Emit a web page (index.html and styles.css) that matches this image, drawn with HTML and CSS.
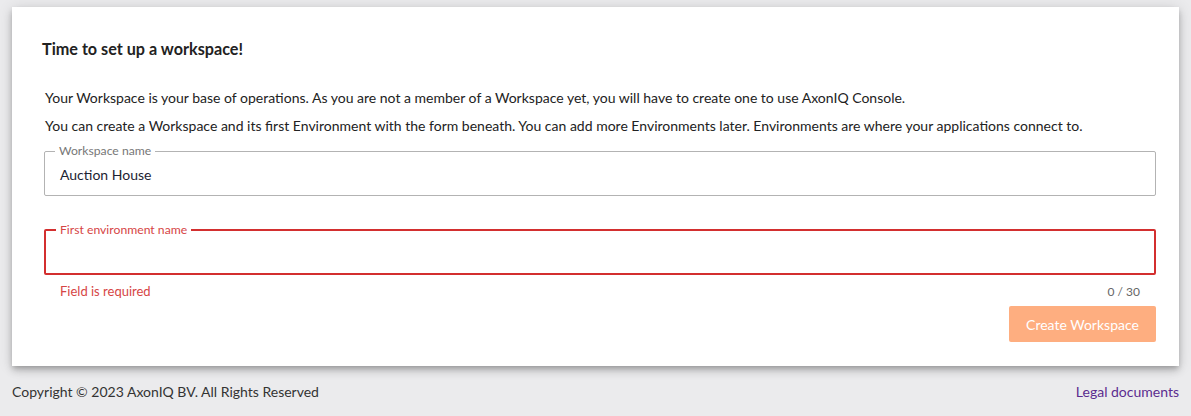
FILE: index.html
```html
<!DOCTYPE html>
<html lang="en">
<head>
<meta charset="utf-8">
<title>Create workspace</title>
<link rel="stylesheet" href="styles.css">
</head>
<body>
<div class="page">
  <main class="card">
    <h1 class="title">Time to set up a workspace!</h1>
    <div class="content">
      <p class="text">Your Workspace is your base of operations. As you are not a member of a Workspace yet, you will have to create one to use AxonIQ Console.</p>
      <p class="text">You can create a Workspace and its first Environment with the form beneath. You can add more Environments later. Environments are where your applications connect to.</p>
      <div class="field">
        <fieldset class="outline">
          <legend class="legend">Workspace name</legend>
          <div class="value">Auction House</div>
        </fieldset>
      </div>
      <div class="field field-error">
        <fieldset class="outline outline-error">
          <legend class="legend">First environment name</legend>
          <div class="value"></div>
        </fieldset>
        <div class="helper">
          <span class="helper-error">Field is required</span>
          <span class="counter">0 / 30</span>
        </div>
      </div>
      <div class="actions">
        <button class="btn" type="button" disabled>Create Workspace</button>
      </div>
    </div>
  </main>
  <footer class="footer">
    <span>Copyright © 2023 AxonIQ BV. All Rights Reserved</span>
    <a class="legal" href="#">Legal documents</a>
  </footer>
</div>
</body>
</html>
```
FILE: styles.css
```css
* { box-sizing: border-box; }
html, body { margin: 0; padding: 0; }
body {
  background: #ebebed;
  font-family: Lato, "Noto Sans", sans-serif;
  color: #222;
}
.page {
  padding: 7px 12px 0 12px;
}
.card {
  background: #fff;
  box-shadow: 0 3px 5px -1px rgba(0,0,0,0.2), 0 5px 8px 0 rgba(0,0,0,0.14), 0 1px 14px 0 rgba(0,0,0,0.12);
  padding: 30px 23px 23px 30px;
  height: 359px;
}
.title {
  margin: 0;
  font-size: 16.2px;
  font-weight: 700;
  line-height: 24px;
  color: #222;
}
.content {
  padding: 0 0 0 2px;
}
.text {
  margin: 0;
  font-size: 14px;
  line-height: 20px;
  color: #222;
  padding-left: 1px;
}
.text:first-of-type { margin-top: 27px; }
.text + .text { margin-top: 8px; }
.field { margin-top: 7px; }
.outline {
  margin: 0;
  border: 1px solid #b3b3b3;
  border-radius: 2px;
  padding: 0 15px 0 15px;
  height: 53px;
  min-width: 0;
}
.legend {
  font-size: 12.2px;
  color: #777;
  padding: 0 4px;
  margin-left: -5px;
  line-height: 16px;
}
.value {
  font-size: 14px;
  line-height: 20px;
  color: #1d2333;
  padding-top: 6px;
}
.field-error { margin-top: 26px; }
.outline-error {
  border: 2px solid #d32f2f;
  padding: 0 14px;
}
.outline-error .legend {
  color: #d64545;
  margin-left: -4px;
}
.helper {
  display: flex;
  justify-content: space-between;
  align-items: baseline;
  padding: 0 16px 0 16px;
  font-size: 12px;
  line-height: 16px;
  margin-top: 8px;
}
.helper-error { color: #d64545; font-size: 13px; }
.counter { color: #666; }
.actions {
  display: flex;
  justify-content: flex-end;
  margin-top: 6px;
}
.btn {
  font-family: Lato, "Noto Sans", sans-serif;
  font-size: 14px;
  color: #fff;
  background: #feae80;
  border: none;
  border-radius: 2px;
  width: 147px;
  height: 36px;
  padding: 0;
}
.footer {
  display: flex;
  justify-content: space-between;
  font-size: 14px;
  line-height: 20px;
  color: #333;
  padding-top: 16px;
}
.legal {
  color: #5b2b8f;
  text-decoration: none;
}
```
